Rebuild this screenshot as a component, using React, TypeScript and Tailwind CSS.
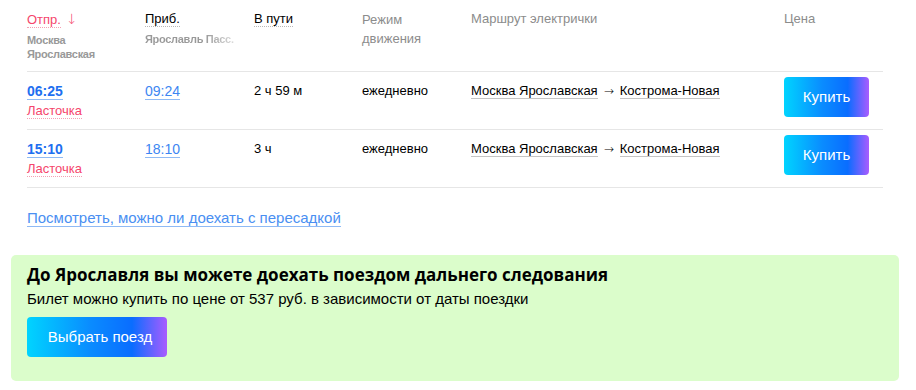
import React from 'react';

const trains = [
  { dep: '06:25', arr: '09:24', dur: '2 ч 59 м' },
  { dep: '15:10', arr: '18:10', dur: '3 ч' },
];

const grad =
  'bg-[linear-gradient(90deg,#00d4ff_0%,#0a8cff_45%,#0a6dff_75%,#a95cff_100%)]';

const App = () => {
  return (
    <div className="w-[916px] h-[390px] bg-white font-['Liberation_Sans',Arial,sans-serif] text-[13px] text-black overflow-hidden">
      {/* Table */}
      <div className="ml-[27px] w-[856px]">
        {/* Header */}
        <div className="grid grid-cols-[118px_109px_108px_109px_313px_99px] h-[72px] border-b border-[#e6e6e6] pt-[10px]">
          <div>
            <div className="leading-[18px]">
              <span className="text-[#f5456c] border-b border-dotted border-[#f5a0b3]">Отпр.</span>
              <span className="text-[#f5456c] ml-[5px] font-['DejaVu_Sans',sans-serif] font-light text-[14px]">↓</span>
            </div>
            <div className="mt-[4px] text-[11px] leading-[14px] font-bold tracking-[-0.3px] text-[#999999]">
              Москва
              <br />
              Ярославская
            </div>
          </div>
          <div>
            <div className="leading-[18px]">
              <span className="border-b border-dotted border-[#b8b8b8]">Приб.</span>
            </div>
            <div className="mt-[4px] text-[11px] leading-[14px] font-bold tracking-[-0.3px] whitespace-nowrap w-[92px] bg-[linear-gradient(90deg,#999999_65%,#e2e2e2_100%)] bg-clip-text text-transparent">
              Ярославль Пасс.
            </div>
          </div>
          <div className="leading-[18px]">
            <span className="border-b border-dotted border-[#b8b8b8]">В пути</span>
          </div>
          <div className="leading-[19px] text-[#8c8c8c]">
            Режим
            <br />
            движения
          </div>
          <div className="leading-[18px] text-[#8c8c8c]">Маршрут электрички</div>
          <div className="leading-[18px] text-[#8c8c8c]">Цена</div>
        </div>

        {/* Rows */}
        {trains.map((t) => (
          <div
            key={t.dep}
            className="grid grid-cols-[118px_109px_108px_109px_313px_99px] h-[58px] border-b border-[#e6e6e6]"
          >
            <div className="pt-[10px]">
              <div className="leading-[18px]">
                <span className="text-[14px] font-bold text-[#1e6ff0] border-b border-[#8fbaf5]">{t.dep}</span>
              </div>
              <div className="leading-[17px] mt-[1px]">
                <span className="text-[#f5456c] border-b border-dotted border-[#f5a0b3]">Ласточка</span>
              </div>
            </div>
            <div className="pt-[10px] leading-[18px]">
              <span className="text-[14px] text-[#3d86f2] border-b border-[#8fbaf5]">{t.arr}</span>
            </div>
            <div className="pt-[10px] leading-[18px]">{t.dur}</div>
            <div className="pt-[10px] leading-[18px]">ежедневно</div>
            <div className="pt-[10px] leading-[18px] whitespace-nowrap">
              <span className="border-b border-[#c4c4c4]">Москва Ярославская</span>
              <span className="mx-[6px] font-['DejaVu_Sans',sans-serif] font-light text-[12px]">→</span>
              <span className="border-b border-[#c4c4c4]">Кострома-Новая</span>
            </div>
            <div className="pt-[5px]">
              <button
                className={`w-[85px] h-[40px] rounded-[4px] text-white text-[15px] ${grad}`}
              >
                Купить
              </button>
            </div>
          </div>
        ))}

        <div className="mt-[21px] leading-[18px]">
          <a className="text-[15px] text-[#4a8ff2] border-b border-[#8fbaf5] cursor-pointer">
            Посмотреть, можно ли доехать с пересадкой
          </a>
        </div>
      </div>

      {/* Long-distance banner */}
      <div className="ml-[11px] mt-[27px] w-[888px] h-[126px] rounded-[5px] bg-[#dbfdcb] px-[16px] pt-[9px]">
        <div className="font-['Open_Sans',sans-serif] font-bold text-[17px] leading-[22px]">
          До Ярославля вы можете доехать поездом дальнего следования
        </div>
        <div className="text-[15px] leading-[18px] mt-[4px]">
          Билет можно купить по цене от 537 руб. в зависимости от даты поездки
        </div>
        <button
          className={`mt-[9px] w-[140px] h-[40px] pl-[6px] rounded-[4px] text-white text-[15px] ${grad}`}
        >
          Выбрать поезд
        </button>
      </div>
    </div>
  );
};

export default App;
